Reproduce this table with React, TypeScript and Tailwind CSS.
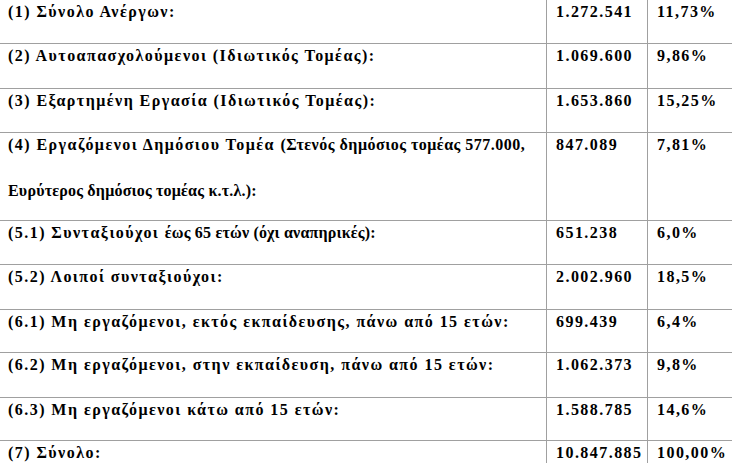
import React from "react";

type Row = { label: React.ReactNode; num: string; pct: string; h: string; last?: boolean };

const rows: Row[] = [
  { label: "(1) Σύνολο Ανέργων:", num: "1.272.541", pct: "11,73%", h: "h-[44px]" },
  { label: "(2) Αυτοαπασχολούμενοι (Ιδιωτικός Τομέας):", num: "1.069.600", pct: "9,86%", h: "h-[45px]" },
  { label: "(3) Εξαρτημένη Εργασία (Ιδιωτικός Τομέας):", num: "1.653.860", pct: "15,25%", h: "h-[44px]" },
  {
    label: (
      <>
        <div>
          (4) Εργαζόμενοι Δημόσιου Τομέα <span className="tracking-[0.5px]">(Στενός δημόσιος τομέας 577.000,</span>
        </div>
        <div className="mt-[28px]">
          <span className="tracking-[0.2px]">Ευρύτερος δημόσιος τομέας κ.τ.λ.):</span>
        </div>
      </>
    ),
    num: "847.089",
    pct: "7,81%",
    h: "h-[88px]",
  },
  {
    label: (
      <>
        (5.1) Συνταξιούχοι <span className="tracking-[0.2px]">έως 65 ετών (όχι αναπηρικές):</span>
      </>
    ),
    num: "651.238",
    pct: "6,0%",
    h: "h-[44px]",
  },
  { label: "(5.2) Λοιποί συνταξιούχοι:", num: "2.002.960", pct: "18,5%", h: "h-[45px]" },
  { label: "(6.1) Μη εργαζόμενοι, εκτός εκπαίδευσης, πάνω από 15 ετών:", num: "699.439", pct: "6,4%", h: "h-[43px]" },
  { label: "(6.2) Μη εργαζόμενοι, στην εκπαίδευση, πάνω από 15 ετών:", num: "1.062.373", pct: "9,8%", h: "h-[45px]" },
  { label: "(6.3) Μη εργαζόμενοι κάτω από 15 ετών:", num: "1.588.785", pct: "14,6%", h: "h-[43px]" },
  { label: "(7) Σύνολο:", num: "10.847.885", pct: "100,00%", h: "h-[44px]", last: true },
];

export default function App() {
  return (
    <div className="w-[732px] h-[463px] overflow-hidden bg-white text-black font-['Liberation_Serif',serif] font-bold text-[16px] leading-[18px] tracking-[1.45px]">
      {rows.map((r, i) => (
        <div
          key={i}
          className={`grid grid-cols-[547px_101px_1fr] ${r.h} ${r.last ? "" : "border-b border-[#a0a0a0]"}`}
        >
          <div className="border-r border-[#a0a0a0] pl-[8px] pt-[3px] whitespace-nowrap">{r.label}</div>
          <div className="border-r border-[#a0a0a0] pl-[9px] pt-[3px] whitespace-nowrap">{r.num}</div>
          <div className="pl-[9px] pt-[3px] whitespace-nowrap">{r.pct}</div>
        </div>
      ))}
    </div>
  );
}
